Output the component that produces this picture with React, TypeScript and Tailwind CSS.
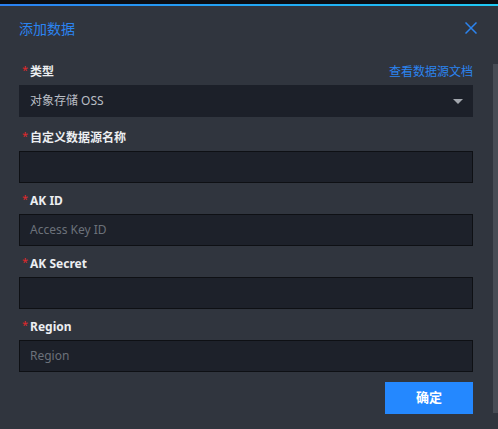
import React from "react";

const font = { fontFamily: '"Noto Sans", "Noto Sans CJK SC", sans-serif' };

function Label({ text, right }: { text: string; right?: React.ReactNode }) {
  return (
    <div className="flex h-[20px] items-center justify-between mb-[3px]">
      <div className="flex items-center text-[12px] font-bold text-[#eceef1] leading-[20px]">
        <span className="text-[#e0282b] text-[11px] font-normal relative -top-[2px] ml-[3px] mr-[2px]">*</span>
        <span>{text}</span>
      </div>
      {right}
    </div>
  );
}

function Input({ placeholder }: { placeholder?: string }) {
  return (
    <div className="h-[32px] bg-[#1d212a] border border-[#0e1014] flex items-center pl-[10px] text-[12px] text-[#6c717a]">
      {placeholder}
    </div>
  );
}

export default function App() {
  return (
    <div className="relative w-[498px] h-[429px] bg-[#30353e] overflow-hidden" style={font}>
      <div className="h-[4px] bg-[#0b0e13]" />
      <div className="h-[2px] bg-gradient-to-r from-[#2a80f2] to-[#1fcaf5]" />
      <div className="h-[44px] flex items-center justify-between pl-[19px] pr-[21px]">
        <span className="text-[14px] text-[#2b84f0]">添加数据</span>
        <svg width="12" height="12" viewBox="0 0 12 12" className="mr-0">
          <path d="M0.5 0.5 L11.5 11.5 M11.5 0.5 L0.5 11.5" stroke="#2b84f0" strokeWidth="1.5" fill="none" />
        </svg>
      </div>
      <div className="pt-[12px] pl-[19px] w-[473px]">
        <div className="mb-[11px]">
          <Label
            text="类型"
            right={<span className="text-[12px] text-[#2b84f0]">查看数据源文档</span>}
          />
          <div className="h-[32px] bg-[#1c2029] flex items-center justify-between pl-[11px] pr-[10px] text-[12px] text-[#b9bdc4]">
            <span>对象存储 OSS</span>
            <svg width="10" height="5" viewBox="0 0 10 5">
              <path d="M0 0 L10 0 L5 5 Z" fill="#a3a7ae" />
            </svg>
          </div>
        </div>
        <div className="mb-[8px]">
          <Label text="自定义数据源名称" />
          <Input />
        </div>
        <div className="mb-[8px]">
          <Label text="AK ID" />
          <Input placeholder="Access Key ID" />
        </div>
        <div className="mb-[8px]">
          <Label text="AK Secret" />
          <Input />
        </div>
        <div>
          <Label text="Region" />
          <Input placeholder="Region" />
        </div>
        <div className="flex justify-end mt-[10px]">
          <button className="w-[88px] h-[32px] bg-[#2488ff] text-white text-[13px] font-bold">确定</button>
        </div>
      </div>
      <div className="absolute right-0 top-[64px] w-[5px] h-[349px] bg-[#474c55]" />
    </div>
  );
}
